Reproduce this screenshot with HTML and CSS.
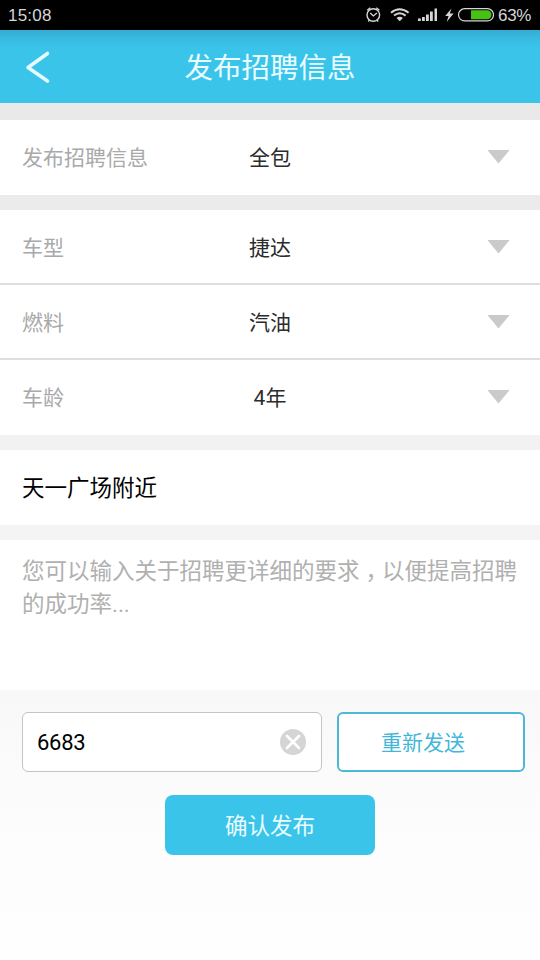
FILE: index.html
```html
<!DOCTYPE html>
<html lang="zh-CN">
<head>
<meta charset="utf-8">
<meta name="viewport" content="width=device-width">
<title>发布招聘信息</title>
<link rel="stylesheet" href="styles.css">
</head>
<body>
<div class="status">
  <span class="time">15:08</span>
  <svg class="status-icons" width="132" height="30" viewBox="0 0 132 30" fill="none" stroke="#d6d6d6">
    <circle cx="11.300" cy="15" r="6.300" stroke-width="1.400"/>
    <path d="M8.200 13l3.100 3 3.600-3M5.200 10.300L8.300 7.800M14.300 7.800l3.100 2.500M7.500 20l-1.200 1.500M15 20l1.200 1.500" stroke-width="1.300"/>
    <path d="M29 12.800q8.500-7 17.600 0M32 15.600q5.700-4.700 11.600 0" stroke-width="2"/>
    <path d="M34.500 18q3.200-2.300 6.400 0l-3.200 3.200z" fill="#d6d6d6" stroke="none"/>
    <path d="M56 18.500h2.800v2.500H56zM60 17h2.800v4H60zM64 14.500h2.800V21H64zM68 11.500h2.800V21H68zM72.500 8.500h2.500V21h-2.500z" fill="#d6d6d6" stroke="none"/>
    <path d="M89.500 8.500l-6.300 7.400h3.400l-2 6 7-8.500h-3.800z" fill="#d6d6d6" stroke="none"/>
    <rect x="96.500" y="8.700" width="35" height="12.200" rx="6.100" stroke-width="1.200"/>
    <path d="M109 10.300h16a4.500 4.500 0 0 1 0 9h-16z" fill="#47c116" stroke="none"/>
  </svg>
  <span class="percent">63%</span>
</div>
<header class="header">
  <svg class="back" width="30" height="36" viewBox="0 0 30 36" fill="none" stroke="#e4fbff" stroke-width="3.600" stroke-linecap="round" stroke-linejoin="round"><path d="M25.500 4.500L6 18.500l19.500 13.500"/></svg>
  <h1>发布招聘信息</h1>
</header>
<main class="form">
  <section class="group">
    <div class="row"><span class="label">发布招聘信息</span><span class="value">全包</span><i class="arrow"></i></div>
  </section>
  <section class="group">
    <div class="row"><span class="label">车型</span><span class="value">捷达</span><i class="arrow"></i></div>
    <div class="row"><span class="label">燃料</span><span class="value">汽油</span><i class="arrow"></i></div>
    <div class="row"><span class="label">车龄</span><span class="value">4年</span><i class="arrow"></i></div>
  </section>
  <section class="group place">天一广场附近</section>
  <section class="group details">您可以输入关于招聘更详细的要求<span class="comma">，</span>以便提高招聘的成功率...</section>
  <div class="verify">
    <div class="code"><span>6683</span>
      <svg width="26" height="26" viewBox="0 0 26 26"><circle cx="13" cy="13" r="13" fill="#d5d5d5"/><path d="M7 7l12 12M19 7L7 19" stroke="#fff" stroke-width="2.600" stroke-linecap="round"/></svg>
    </div>
    <div class="resend">重新发送</div>
  </div>
  <div class="submit">确认发布</div>
</main>
</body>
</html>
```
FILE: styles.css
```css
* { box-sizing: border-box; }
body {
  margin: 0;
  width: 540px;
  height: 960px;
  overflow: hidden;
  display: flex;
  flex-direction: column;
  background: #fff;
  font-family: Roboto, "Noto Sans CJK SC", sans-serif;
  font-size: 21px;
}
.status {
  height: 30px;
  flex: none;
  display: flex;
  align-items: center;
  padding: 0 9px 0 8px;
  background: #000;
  color: #d6d6d6;
  font-family: "Liberation Sans", sans-serif;
  font-size: 17px;
}
.time, .percent { padding-top: 2px; }
.time { letter-spacing: 0.2px; }
.status-icons { margin-left: auto; margin-right: 4px; }
.percent { width: 33px; letter-spacing: -0.3px; white-space: nowrap; }
.header {
  height: 73px;
  flex: none;
  display: grid;
  grid-template-columns: 60px 1fr 60px;
  align-items: center;
  background: linear-gradient(#36abd0, #38bbe2 9px, #3bc4ea 18px);
  color: #e9fcff;
}
.back { margin-left: 22px; }
.header h1 {
  margin: 0;
  padding-top: 4px;
  text-align: center;
  font-size: 28.5px;
  line-height: 42px;
  font-weight: 400;
}
.form {
  flex: 1;
  display: flex;
  flex-direction: column;
  padding-top: 17px;
  background: linear-gradient(#e9e9e9, #ebebeb 100px, #f2f2f2 340px, #f8f8f8 590px, #fdfdfd 740px, #fefefe);
}
.group { flex: none; margin-bottom: 15px; background: #fff; }
.row {
  height: 75px;
  display: grid;
  grid-template-columns: 180px 180px 1fr;
  align-items: center;
  border-bottom: 2px solid #dedede;
}
.row:last-child { border-bottom-color: #fff; }
.label, .value { padding-bottom: 2px; }
.label { padding-left: 22px; color: #a9a9a9; white-space: nowrap; }
.value { color: #2c2c2c; text-align: center; }
.arrow {
  justify-self: end;
  width: 23px;
  height: 14px;
  margin-right: 30px;
  background: #cacaca;
  clip-path: polygon(0 0, 100% 0, 50% 100%);
}
.place {
  height: 75px;
  padding-left: 22px;
  font-size: 22.5px;
  line-height: 76px;
  color: #000;
}
.details {
  height: 150px;
  margin-bottom: 0;
  padding: 15px 20px 0 22px;
  font-size: 22.5px;
  line-height: 32.5px;
  color: #b0b0b0;
}
.comma {
  display: inline-block;
  width: 1em;
  padding-left: 6px;
  font-feature-settings: "halt";
}
.verify { display: flex; gap: 15px; padding: 22px 15px 0 22px; }
.code {
  width: 300px;
  height: 60px;
  display: flex;
  align-items: center;
  justify-content: space-between;
  padding: 0 15px 0 14px;
  border: 1px solid #c4c4c4;
  border-radius: 6px;
  background: #fff;
  font-size: 22px;
  letter-spacing: -0.3px;
}
.resend {
  flex: 1;
  height: 60px;
  padding-right: 16px;
  border: 2px solid #4db8d6;
  border-radius: 6px;
  background: #fff;
  color: #43b7d9;
  text-align: center;
  line-height: 59px;
}
.submit {
  width: 210px;
  height: 60px;
  margin: 23px auto 0;
  border-radius: 8px;
  background: #3bc4ea;
  color: #e9fcff;
  font-size: 22.5px;
  line-height: 62px;
  text-align: center;
}
```
